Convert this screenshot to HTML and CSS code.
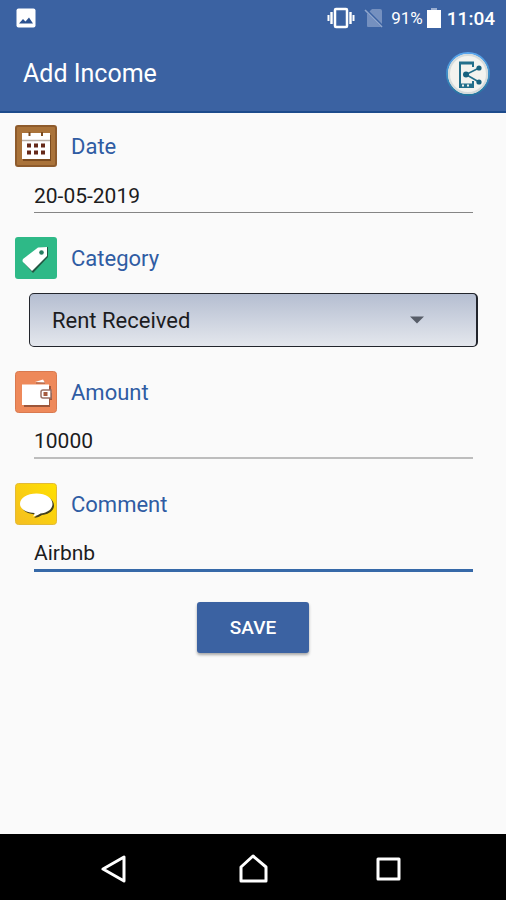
FILE: index.html
```html
<!DOCTYPE html>
<html lang="en">
<head>
<meta charset="utf-8">
<meta name="viewport" content="width=device-width, initial-scale=1">
<title>Add Income</title>
<link rel="stylesheet" href="styles.css">
</head>
<body>
<header class="top">
  <div class="status">
    <svg class="status-photo" width="20" height="20" viewBox="0 0 20 20" aria-hidden="true"><rect x="0.500" y="0.500" width="19" height="19" rx="2" fill="#fff"/><path d="M3 15.500l4-4.500 2.500 2.500 3.500-4 4 6z" fill="#2c5290"/></svg>
    <div class="status-right">
      <svg width="28" height="22" viewBox="0 0 28 22" fill="none" stroke="#fff" aria-hidden="true"><rect x="8" y="2" width="12" height="18" rx="1" stroke-width="2.500"/><path d="M4.500 5v12M23.500 5v12" stroke-width="2.400"/><path d="M1.500 8v6M26.500 8v6" stroke-width="2"/></svg>
      <svg class="sim" width="20" height="20" viewBox="0 0 20 20" aria-hidden="true"><path d="M8 1h8q2 0 2 2v15q0 1-1 1H4q-1 0-1-1V6z" fill="#7590bf"/><path d="M1 1l18 18" stroke="#3b62a2" stroke-width="3"/><path d="M1 2l17 17" stroke="#91a7cd" stroke-width="1.600"/></svg>
      <span class="percent">91%</span>
      <svg class="battery" width="14" height="20" viewBox="0 0 14 20" aria-hidden="true"><path d="M4 0h6v2h4v18H0V2h4z" fill="#fff"/><path d="M4 0h6v2H4z" fill="#9cafd1"/></svg>
      <span class="clock">11:04</span>
    </div>
  </div>
  <div class="appbar">
    <h1>Add Income</h1>
    <button class="share" type="button" aria-label="Share">
      <svg width="44" height="44" viewBox="0 0 44 44" aria-hidden="true">
        <defs><linearGradient id="ring" x2="0" y2="1"><stop offset="0" stop-color="#5ba6ee"/><stop offset="1" stop-color="#25769f"/></linearGradient></defs>
        <circle cx="22" cy="22" r="21" fill="#f3f3ef" stroke="url(#ring)" stroke-width="2"/>
        <circle cx="22" cy="22" r="19" fill="none" stroke="#d5dbdb" stroke-width="2"/>
        <path d="M27 15v-4H14v24h13v-6" fill="none" stroke="#226f8b" stroke-width="2"/>
        <path d="M13 9.500h15v3H13zM13 31.500h15v4H13z" fill="#226f8b"/>
        <path d="M16 33.500h2M21 33.500h2" stroke="#f3f3ef" stroke-width="2"/>
        <path d="M33 16l-13 6.500L33 30" fill="none" stroke="#226f8b" stroke-width="1.600"/>
        <g fill="#17627f"><circle cx="33" cy="16" r="2.600"/><circle cx="20" cy="22.500" r="3"/><circle cx="33" cy="30" r="2.600"/></g>
      </svg>
    </button>
  </div>
</header>
<main>
  <form>
    <div class="field">
      <label for="date">
        <svg width="42" height="42" viewBox="0 0 42 42" aria-hidden="true"><rect x="1" y="1" width="40" height="40" rx="2" fill="#aa733a" stroke="#8e5b2c" stroke-width="2"/><path d="M35 10v25H8" fill="none" stroke="#7c4c20" stroke-width="2"/><path d="M7 8h28v26H7z" fill="#fff"/><path d="M7 15.500h28" stroke="#b9aea4" stroke-width="1.500"/><path d="M14.500 7v4M27 7v4" stroke="#7c4c20" stroke-width="2"/><path d="M12 20.500h4m3 0h4m3 0h4M12 27.500h4m3 0h4m3 0h4" stroke="#662919" stroke-width="4"/></svg>
        <span>Date</span>
      </label>
      <input id="date" type="text" value="20-05-2019">
    </div>
    <div class="field">
      <label for="category">
        <svg width="42" height="42" viewBox="0 0 42 42" aria-hidden="true"><rect width="42" height="42" rx="3" fill="#2eb987"/><path d="M9 23L24 11l9-1v10L18 36l-9-10z" fill="#235642"/><path d="M8 22L23 10.500l9-.5v9L17 34 8 25q-1-1 0-3z" fill="#fff"/><circle cx="26.500" cy="15.500" r="2.300" fill="#277c60"/></svg>
        <span>Category</span>
      </label>
      <div class="select-box">
        <select id="category"><option>Rent Received</option></select>
        <svg class="arrow" width="14" height="8" viewBox="0 0 14 8" aria-hidden="true"><path d="M0 .5h14L7 7.500z" fill="#575d68"/></svg>
      </div>
    </div>
    <div class="field field-soft">
      <label for="amount">
        <svg width="42" height="42" viewBox="0 0 42 42" aria-hidden="true"><rect x=".5" y=".5" width="41" height="41" rx="3" fill="#ee895a" stroke="#d9794f"/><path d="M9 15h27v7h1v7h-2v7H9z" fill="#9c563a"/><path d="M20 11l8-2.500 2 3.500z" fill="#fff"/><path d="M21 12h9" stroke="#99563d"/><path d="M7 13.500h27V34H7z" fill="#fff"/><path d="M36 19h-8q-2 0-2 2v4q0 2 2 2h8z" fill="#fff" stroke="#987066" stroke-width="1.500"/><rect x="28.500" y="21" width="4" height="4" fill="#a45a3e"/></svg>
        <span>Amount</span>
      </label>
      <input id="amount" type="text" inputmode="numeric" value="10000">
    </div>
    <div class="field field-active">
      <label for="comment">
        <svg width="42" height="42" viewBox="0 0 42 42" aria-hidden="true"><defs><linearGradient id="gold" x1="1" x2="0" y2="1"><stop offset="0" stop-color="#ffe100"/><stop offset="1" stop-color="#f4bd22"/></linearGradient></defs><rect x=".5" y=".5" width="41" height="41" rx="3" fill="url(#gold)" stroke="#e3ba35"/><g id="bubble" fill="#43401f" transform="translate(1.500 1.500)"><path d="M21.500 10.500c9.500 0 16 4.500 16 10.500 0 5.500-6 9-12 9.500-2 1.500-5 2.500-8 3 1.500-1 2-2 2-3.500C11 29.500 5 26 5 21c0-6 7-10.500 16.500-10.500z"/></g><path fill="#fff" d="M21.500 10.500c9.500 0 16 4.500 16 10.500 0 5.500-6 9-12 9.500-2 1.500-5 2.500-8 3 1.500-1 2-2 2-3.500C11 29.500 5 26 5 21c0-6 7-10.500 16.500-10.500z"/></svg>
        <span>Comment</span>
      </label>
      <input id="comment" type="text" value="Airbnb">
    </div>
    <button class="save" type="button">SAVE</button>
  </form>
</main>
<nav aria-label="System">
  <button type="button" aria-label="Back"><svg width="32" height="32" viewBox="0 0 32 32"><path d="M23 4v24L2 16z"/></svg></button>
  <button type="button" aria-label="Home"><svg width="32" height="32" viewBox="0 0 32 32"><path d="M16 3L29 14v14H4V14z"/></svg></button>
  <button type="button" aria-label="Recent apps"><svg width="32" height="32" viewBox="0 0 32 32"><path d="M5 6h21v20H5z"/></svg></button>
</nav>
</body>
</html>
```
FILE: styles.css
```css
* {
  box-sizing: border-box;
}

body {
  margin: 0;
  min-height: 100vh;
  display: flex;
  flex-direction: column;
  background: #fafafa;
  color: #1c1c1e;
  font-family: Roboto, "Liberation Sans", sans-serif;
}

button {
  border: 0;
  padding: 0;
  background: none;
  font-family: inherit;
}

svg {
  display: block;
  flex: none;
}

.top {
  background: #3b62a2;
  border-bottom: 2px solid #1d4b8c;
  color: #fff;
}

.status {
  display: flex;
  align-items: center;
  justify-content: space-between;
  height: 36px;
  padding: 0 11px 0 16px;
}

.status-right {
  display: flex;
  align-items: center;
}

.sim {
  margin-left: 9px;
}

.percent {
  margin-left: 7px;
  font-size: 17px;
}

.battery {
  margin-left: 4px;
}

.clock {
  margin-left: 6px;
  font-size: 19px;
  font-weight: 500;
}

.appbar {
  display: flex;
  align-items: center;
  justify-content: space-between;
  height: 75px;
  padding: 0 16px 0 23px;
}

h1 {
  margin: 0;
  font-size: 25px;
  font-weight: 400;
}

main {
  flex: 1;
  padding: 12px 28px 24px 15px;
}

form {
  display: flex;
  flex-direction: column;
  gap: 24px;
}

.field {
  display: flex;
  flex-direction: column;
}

label {
  display: flex;
  align-items: center;
  gap: 14px;
  color: #2f5ca3;
  font-size: 22px;
}

input {
  height: 46px;
  margin: 0 5px 0 19px;
  padding: 12px 0 0;
  border: 0;
  border-bottom: 1px solid #858585;
  border-radius: 0;
  outline: 0;
  background: transparent;
  color: inherit;
  font-family: inherit;
  font-size: 21px;
}

.field-soft input {
  border-bottom: 2px solid #bdbdbd;
}

.field-active input {
  height: 47px;
  border-bottom: 3px solid #3669a8;
}

.select-box {
  position: relative;
  margin: 14px 0 0 14px;
}

select {
  appearance: none;
  display: block;
  width: 100%;
  height: 54px;
  padding: 0 22px;
  border: 1px solid #22252c;
  border-width: 1px 2px 1px 1px;
  border-radius: 5px;
  background: linear-gradient(#b5bed1, #e4e7ed);
  color: inherit;
  font-family: inherit;
  font-size: 22px;
}

.arrow {
  position: absolute;
  top: 23px;
  right: 54px;
  pointer-events: none;
}

.save {
  align-self: center;
  height: 51px;
  margin: 6px 0 0 13px;
  padding: 0 33px;
  border-radius: 3px;
  background: #3b62a2;
  box-shadow: 0 2px 3px #00000055;
  color: #fff;
  font-size: 19px;
  font-weight: 500;
}

nav {
  display: flex;
  justify-content: center;
  gap: 104px;
  padding: 19px 0 15px;
  background: #000;
}

nav path {
  fill: none;
  stroke: #fff;
  stroke-width: 3;
  stroke-linejoin: round;
}
```
